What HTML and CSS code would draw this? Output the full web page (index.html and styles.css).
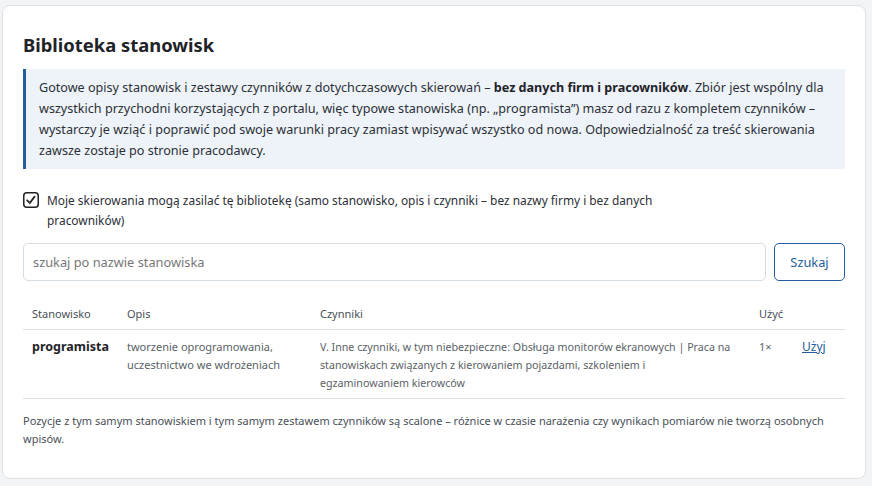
FILE: index.html
```html
<!DOCTYPE html>
<html lang="pl">
<head>
<meta charset="utf-8">
<title>Biblioteka stanowisk</title>
<link rel="stylesheet" href="styles.css">
</head>
<body>
<div class="card">
  <h2 class="title">Biblioteka stanowisk</h2>
  <div class="info">Gotowe opisy stanowisk i zestawy czynników z dotychczasowych skierowań – <b>bez danych firm i pracowników</b>. Zbiór jest wspólny dla wszystkich przychodni korzystających z portalu, więc typowe stanowiska (np. „programista”) masz od razu z kompletem czynników – wystarczy je wziąć i poprawić pod swoje warunki pracy zamiast wpisywać wszystko od nowa. Odpowiedzialność za treść skierowania zawsze zostaje po stronie pracodawcy.</div>
  <label class="consent">
    <span class="box"><svg viewBox="0 0 16 16" width="16" height="16"><rect x="0.75" y="0.75" width="14.5" height="14.5" rx="3" fill="#fff" stroke="#222" stroke-width="1.5"/><path d="M4.2 8.3 L6.8 11 L11.6 4.6" fill="none" stroke="#222" stroke-width="1.8" stroke-linecap="round" stroke-linejoin="round"/></svg></span>
    <span class="consent-text">Moje skierowania mogą zasilać tę bibliotekę (samo stanowisko, opis i czynniki – bez nazwy firmy i bez danych pracowników)</span>
  </label>
  <div class="search">
    <input class="search-input" type="text" placeholder="szukaj po nazwie stanowiska">
    <button class="btn" type="button">Szukaj</button>
  </div>
  <table class="tbl">
    <thead>
      <tr><th class="c1">Stanowisko</th><th class="c2">Opis</th><th class="c3">Czynniki</th><th class="c4">Użyć</th><th class="c5"></th></tr>
    </thead>
    <tbody>
      <tr>
        <td class="c1 name">programista</td>
        <td class="c2 muted">tworzenie oprogramowania, uczestnictwo we wdrożeniach</td>
        <td class="c3 muted">V. Inne czynniki, w tym niebezpieczne: Obsługa monitorów ekranowych | Praca na stanowiskach związanych z kierowaniem pojazdami, szkoleniem i egzaminowaniem kierowców</td>
        <td class="c4 muted">1×</td>
        <td class="c5"><a href="#" class="use">Użyj</a></td>
      </tr>
    </tbody>
  </table>
  <p class="note">Pozycje z tym samym stanowiskiem i tym samym zestawem czynników są scalone – różnice w czasie narażenia czy wynikach pomiarów nie tworzą osobnych wpisów.</p>
</div>
</body>
</html>
```
FILE: styles.css
```css
* { box-sizing: border-box; }
html, body { margin: 0; padding: 0; }
body {
  background: #f3f4f6;
  font-family: "Noto Sans", "Open Sans", sans-serif;
  color: #222;
  padding: 5px 6px 6px 2px;
}
.card {
  background: #fff;
  border: 1px solid #dde1e6;
  border-radius: 8px;
  padding: 25px 20px 30px 20px;
}
.title {
  margin: 0 0 10px 0;
  font-size: 18.4px;
  font-weight: 700;
  line-height: 28px;
  color: #1f2328;
}
.info {
  background: #eef3f9;
  border-left: 3px solid #245d9c;
  padding: 8px 8px 8px 13px;
  font-size: 12.6px;
  line-height: 21px;
  color: #2b2f36;
}
.info b { font-weight: 700; color: #1f2328; }
.consent {
  display: flex;
  align-items: flex-start;
  gap: 8px;
  margin-top: 21px;
  font-size: 11.9px;
  line-height: 20px;
  color: #2b2f36;
}
.box { flex: none; width: 16px; height: 16px; margin-top: 2px; }
.box svg { display: block; }
.consent-text { max-width: 620px; }
.search {
  display: flex;
  gap: 8px;
  margin-top: 13px;
}
.search-input {
  flex: 1;
  height: 38px;
  border: 1px solid #d5dbe3;
  border-radius: 5px;
  padding: 0 9px;
  font-family: inherit;
  font-size: 12.8px;
  color: #222;
}
.search-input::placeholder { color: #777; }
.btn {
  width: 71px;
  height: 38px;
  border: 1px solid #245d9c;
  border-radius: 5px;
  background: #fff;
  color: #245d9c;
  font-family: inherit;
  font-size: 12.8px;
}
.tbl {
  width: 100%;
  table-layout: fixed;
  border-collapse: collapse;
  margin-top: 21px;
}
.tbl th {
  text-align: left;
  font-weight: 400;
  font-size: 11px;
  line-height: 18px;
  color: #4a4f57;
  padding: 3px 9px 6px 9px;
  border-bottom: 1px solid #d9dee5;
}
.tbl td {
  vertical-align: top;
  font-size: 11px;
  line-height: 18px;
  padding: 8px 9px 6px 9px;
  border-bottom: 1px solid #d9dee5;
}
.tbl td.c3 { padding-right: 17px; font-size: 10.7px; }
.c1 { width: 95px; }
.c2 { width: 193px; }
.c3 { width: 439px; }
.c4 { width: 43px; }
.c5 { width: 52px; }
.tbl td.name { font-weight: 700; font-size: 12.5px; color: #1f2328; }
.muted { color: #5a5f67; }
.use { color: #245d9c; font-size: 12px; text-decoration: underline; }
.note {
  margin: 13px 0 0 0;
  font-size: 11px;
  line-height: 18px;
  color: #4a4f57;
}
```
